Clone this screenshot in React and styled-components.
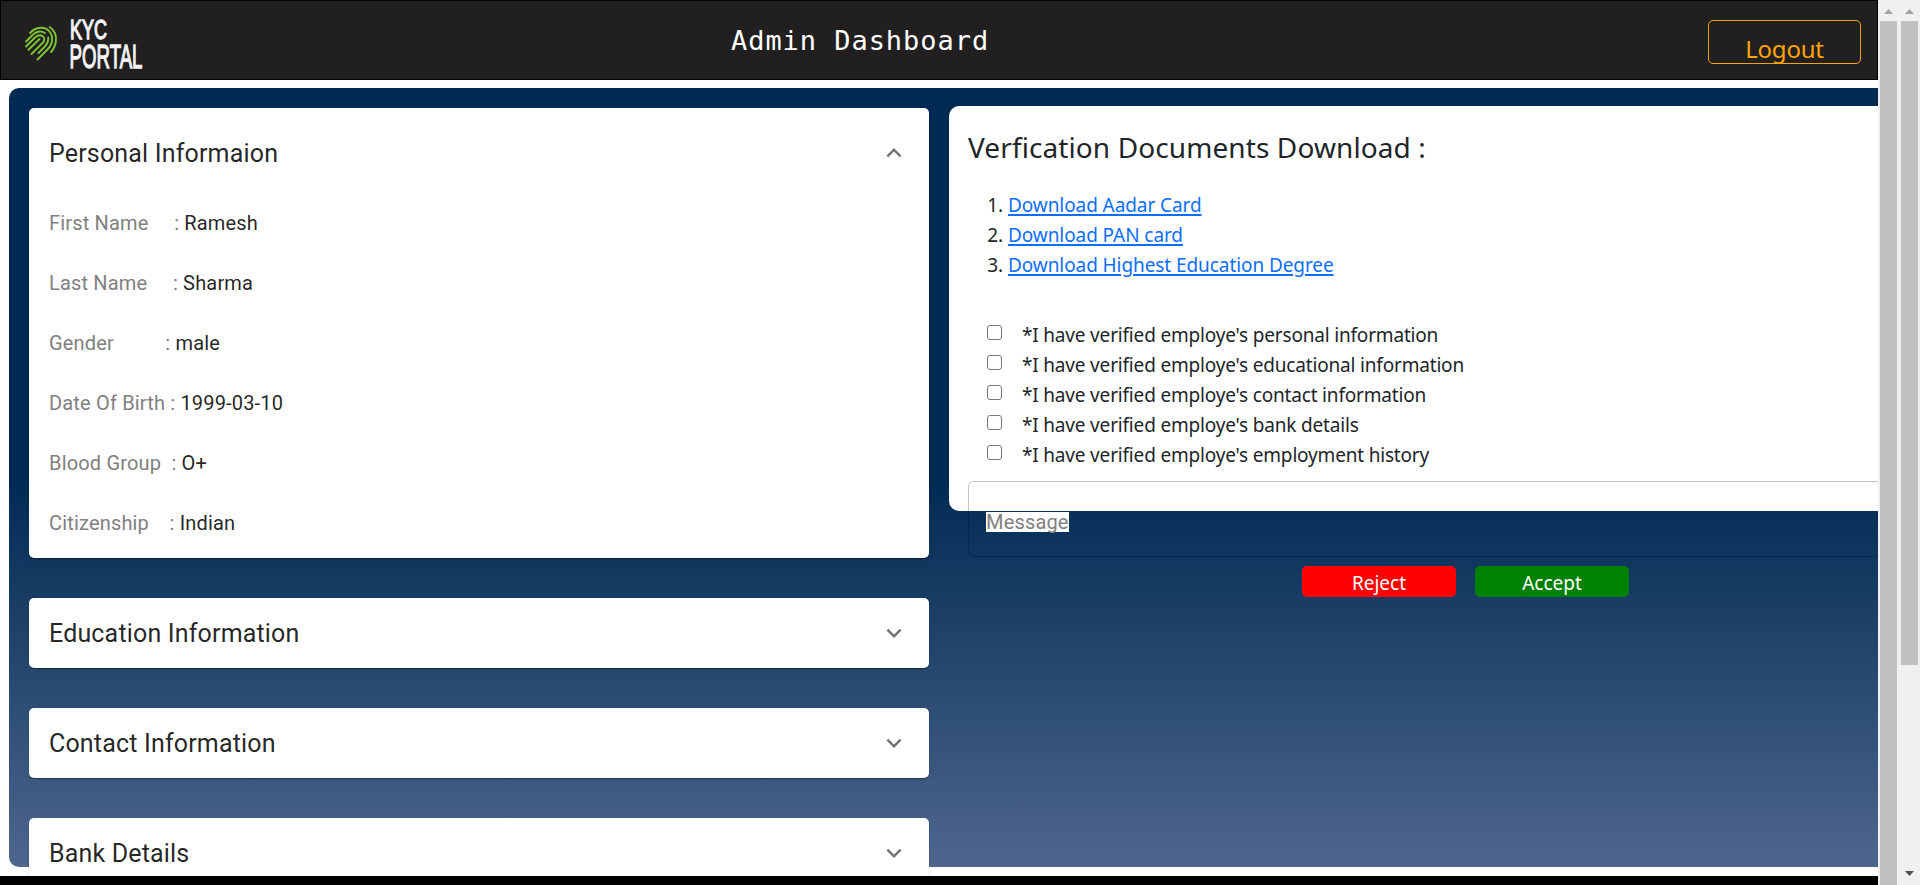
import React from "react";
import styled, { createGlobalStyle } from "styled-components";

const segoe = `"Noto Sans", "Open Sans", sans-serif`;
const roboto = `Roboto, "Liberation Sans", sans-serif`;

const GlobalStyle = createGlobalStyle`
  *, *::before, *::after { box-sizing: border-box; }
  html, body { margin: 0; height: 885px; overflow: hidden; }
  body { background: #fff; color: #212529; font-family: ${segoe}; font-size: 19px; line-height: 30px; }
`;

const Frame = styled.div`
  display: flex;
  width: 1920px;
  height: 885px;
  overflow: hidden;
`;

const Page = styled.div`
  display: flex;
  flex-direction: column;
  width: 1878px;
  height: 885px;
  overflow: hidden;
  flex: none;
`;

const Header = styled.header`
  flex: none;
  display: grid;
  grid-template-columns: 710px auto 1fr;
  align-items: center;
  height: 80px;
  padding: 0 16px 0 20px;
  border: 1px solid #000;
  background: #221f20;
`;

const Logo = styled.svg`
  display: block;
`;

const PageTitle = styled.h1`
  margin: 2px 0 0;
  color: #fff;
  font: 400 27px/40px "DejaVu Sans Mono", monospace;
  letter-spacing: 0.95px;
`;

const LogoutButton = styled.button`
  justify-self: end;
  width: 153px;
  height: 44px;
  margin-top: 3px;
  padding: 14px 0 0;
  border: 1px solid orange;
  border-radius: 5px;
  background: transparent;
  color: orange;
  font: 400 24px/28px ${segoe};
  letter-spacing: -0.2px;
`;

const Content = styled.main`
  flex: none;
  display: grid;
  grid-template-columns: 900px 1000px;
  column-gap: 20px;
  align-items: start;
  width: 1960px;
  height: 779px;
  margin: 8px 0 9px 9px;
  padding: 18px 20px 0;
  border-radius: 10px;
  background: linear-gradient(#002a53 50%, #4e668d);
`;

const Accordions = styled.div`
  display: flex;
  flex-direction: column;
  gap: 40px;
  padding-top: 2px;
`;

const Accordion = styled.section`
  padding: 0 20px;
  border-radius: 5px;
  background: #fff;
  color: rgba(0, 0, 0, 0.87);
  font-family: ${roboto};
  box-shadow: 0 2px 1px -1px rgba(0, 0, 0, 0.2), 0 1px 1px rgba(0, 0, 0, 0.14), 0 1px 3px rgba(0, 0, 0, 0.12);
`;

const Summary = styled.div`
  display: flex;
  align-items: center;
  justify-content: space-between;
  height: ${(p) => (p.$open ? 90 : 70)}px;
`;

const SummaryTitle = styled.h2`
  margin: 2px 0 0;
  font-size: 25px;
  font-weight: 400;
  line-height: 40px;
  letter-spacing: 0.17px;
`;

const Chevron = styled.svg`
  width: 30px;
  height: 30px;
  fill: rgba(0, 0, 0, 0.54);
  transform: ${(p) => (p.$open ? "rotate(180deg)" : "none")};
`;

const Fields = styled.div`
  display: flex;
  flex-direction: column;
  gap: 30px;
  padding: 10px 0 20px;
`;

const Field = styled.p`
  margin: 0;
  font-size: 20px;
  line-height: 30px;
  letter-spacing: 0.17px;
  white-space: pre;
`;

const FieldLabel = styled.span`
  color: gray;
`;

const Card = styled.section`
  display: flex;
  flex-direction: column;
  height: 405px;
  padding: 19px 19px 0;
  border-radius: 10px;
  background: #fff;
`;

const CardTitle = styled.h2`
  flex: none;
  margin: 5px 0 26px;
  font-size: 28px;
  font-weight: 400;
  line-height: 34px;
  letter-spacing: 0.1px;
`;

const Documents = styled.ol`
  flex: none;
  margin: 0;
  padding: 0 0 0 40px;
  letter-spacing: -0.08px;
`;

const DocumentLink = styled.a`
  color: #0d6efd;
  text-decoration: underline;
  text-decoration-thickness: 2px;
  text-underline-offset: 2px;
`;

const Checks = styled.div`
  flex: none;
  display: flex;
  flex-direction: column;
  margin-top: 39px;
  padding-left: 19px;
  letter-spacing: -0.18px;
`;

const Check = styled.label`
  display: flex;
  align-items: flex-start;
  gap: 20px;
  height: 30px;
`;

const CheckText = styled.span`
  padding-top: 1px;
`;

const Box = styled.input`
  appearance: none;
  width: 15px;
  height: 15px;
  margin: 6px 0 0;
  border: 1px solid #767676;
  border-radius: 3px;
  background: #fff;
`;

const MessageField = styled.div`
  flex: none;
  display: flex;
  align-items: flex-end;
  width: 1000px;
  height: 76px;
  margin-top: 12px;
  padding: 0 17px 24px;
  border: 1px solid rgba(0, 0, 0, 0.23);
  border-radius: 5px;
`;

const MessagePlaceholder = styled.span`
  background: #fff;
  color: gray;
  font: 400 20px/20px ${roboto};
  letter-spacing: 0.17px;
`;

const Actions = styled.div`
  flex: none;
  display: flex;
  gap: 19px;
  margin-top: 9px;
  padding-left: 334px;
`;

const ActionButton = styled.button`
  width: 154px;
  height: 31px;
  padding: 4px 0 0;
  border: 0;
  border-radius: 5px;
  background: ${(p) => p.$color};
  color: #fff;
  font: 400 19px/27px ${segoe};
`;

const Footer = styled.footer`
  flex: none;
  height: 9px;
  background: #000;
`;

const ScrollTrack = styled.div`
  display: flex;
  flex-direction: column;
  flex: none;
  width: 21px;
  height: 885px;
  padding: 0 1px 0 2px;
  background: #f0f0f0;
`;

const ScrollThumb = styled.div`
  flex: none;
  width: 17px;
  height: ${(p) => p.$length}px;
  background: #c1c1c1;
`;

const ScrollArrow = styled.svg`
  flex: none;
  display: block;
  width: 17px;
  height: 21px;
  margin-top: ${(p) => (p.$bottom ? "auto" : 0)};
`;

const personal = [
  ["First Name     : ", "Ramesh"],
  ["Last Name     : ", "Sharma"],
  ["Gender          : ", "male"],
  ["Date Of Birth : ", "1999-03-10"],
  ["Blood Group  : ", "O+"],
  ["Citizenship    : ", "Indian"],
];
const documents = ["Download Aadar Card", "Download PAN card", "Download Highest Education Degree"];
const checks = ["personal information", "educational information", "contact information", "bank details", "employment history"];

function KycLogo() {
  return (
    <Logo width="130" height="76" viewBox="21 2 130 76" overflow="visible">
      <g fill="none" stroke="#7ec636" strokeWidth="1.9" strokeLinecap="round">
        <path d="M49.700 27C54.500 30 57 36 55.800 42C55 46 53.500 49.500 51 52" />
        <path d="M30 33C36 26.500 45 26 49.500 31.500C54 37.500 52.500 44.500 47.500 49.500L37.500 59.500" />
        <path d="M26.200 41.500L32 35.500C36 31.500 41 30.500 45 33" />
        <path d="M48.300 37.500C48.800 41.500 46.500 45 43.500 48L38.500 53" />
        <path d="M26 46.500L35 37.500C41 32.500 47 37.500 43 42.500L31.500 54" />
        <path d="M28.500 49.800L39.500 39" />
      </g>
      <g
        fill="#f4f4f6"
        stroke="#f4f4f6"
        strokeWidth="1.3"
        fontFamily="Liberation Sans Narrow, Liberation Sans, sans-serif"
        fontWeight="400"
      >
        <text x="70" y="39" fontSize="28" textLength="37" lengthAdjust="spacingAndGlyphs">KYC</text>
        <text x="69.500" y="67.500" fontSize="34" textLength="73" lengthAdjust="spacingAndGlyphs">PORTAL</text>
      </g>
    </Logo>
  );
}

function Section({ title, open, children }) {
  return (
    <Accordion>
      <Summary $open={open}>
        <SummaryTitle>{title}</SummaryTitle>
        <Chevron $open={open} viewBox="0 0 24 24">
          <path d="M16.59 8.59 12 13.17 7.410 8.590 6 10l6 6 6-6z" />
        </Chevron>
      </Summary>
      {children}
    </Accordion>
  );
}

export default function App() {
  return (
    <Frame>
      <GlobalStyle />
      <Page>
        <Header>
          <KycLogo />
          <PageTitle>Admin Dashboard</PageTitle>
          <LogoutButton>Logout</LogoutButton>
        </Header>
        <Content>
          <Accordions>
            <Section title="Personal Informaion" open>
              <Fields>
                {personal.map(([label, value]) => (
                  <Field key={label}>
                    <FieldLabel>{label}</FieldLabel>
                    {value}
                  </Field>
                ))}
              </Fields>
            </Section>
            <Section title="Education Information" />
            <Section title="Contact Information" />
            <Section title="Bank Details" />
          </Accordions>
          <Card>
            <CardTitle>Verfication Documents Download :</CardTitle>
            <Documents>
              {documents.map((name) => (
                <li key={name}>
                  <DocumentLink href="#">{name}</DocumentLink>
                </li>
              ))}
            </Documents>
            <Checks>
              {checks.map((topic) => (
                <Check key={topic}>
                  <Box type="checkbox" />
                  <CheckText>*I have verified employe's {topic}</CheckText>
                </Check>
              ))}
            </Checks>
            <MessageField>
              <MessagePlaceholder>Message</MessagePlaceholder>
            </MessageField>
            <Actions>
              <ActionButton $color="red">Reject</ActionButton>
              <ActionButton $color="green">Accept</ActionButton>
            </Actions>
          </Card>
        </Content>
        <Footer />
      </Page>
      <ScrollTrack>
        <ScrollArrow viewBox="0 0 17 21">
          <path d="M4 14 8.500 9 13 14z" fill="#a3a3a3" />
        </ScrollArrow>
        <ScrollThumb $length={864} />
      </ScrollTrack>
      <ScrollTrack>
        <ScrollArrow viewBox="0 0 17 21">
          <path d="M4 14 8.500 9 13 14z" fill="#a3a3a3" />
        </ScrollArrow>
        <ScrollThumb $length={644} />
        <ScrollArrow $bottom viewBox="0 0 17 21">
          <path d="M4 7 8.500 12 13 7z" fill="#505050" />
        </ScrollArrow>
      </ScrollTrack>
    </Frame>
  );
}
